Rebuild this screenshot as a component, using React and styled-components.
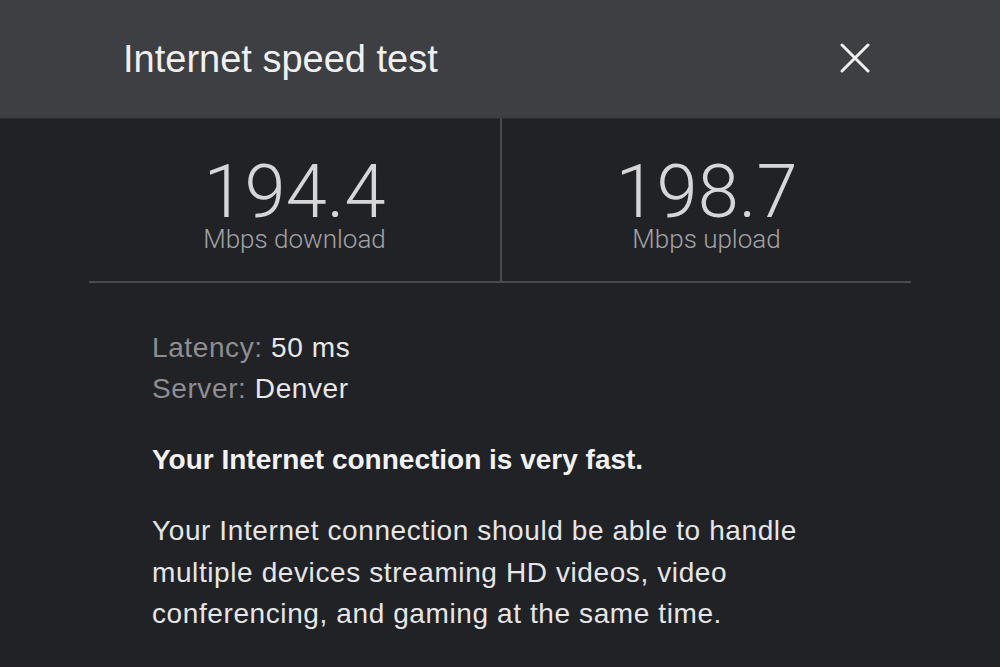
import React from 'react'
import styled, { createGlobalStyle } from 'styled-components'

const GlobalStyle = createGlobalStyle`
  html, body {
    margin: 0;
    padding: 0;
    background: #212226;
  }
  body {
    font-family: "Liberation Sans", Arial, sans-serif;
  }
`

const Page = styled.div`
  width: 1000px;
  height: 667px;
  overflow: hidden;
  background: #212226;
`

const Header = styled.header`
  height: 118px;
  display: flex;
  align-items: center;
  justify-content: space-between;
  padding: 0 130px 0 123px;
  box-sizing: border-box;
  background: #3e3f43;
  box-shadow: 0 1px 0 #2a2b2f;
`

const Title = styled.h1`
  margin: 0;
  font-size: 38px;
  font-weight: 400;
  color: #f0f0f0;
`

const Close = styled.button`
  width: 30px;
  height: 30px;
  padding: 0;
  border: 0;
  background: none;
  display: flex;
  cursor: pointer;
  margin-top: -2px;
`

// two result columns with the divider between them
const Stats = styled.section`
  margin: 0 89px;
  display: grid;
  grid-template-columns: 1fr 1fr;
  border-bottom: 2px solid #4a4b4f;
`

const Stat = styled.div`
  display: flex;
  flex-direction: column;
  align-items: center;
  padding: 46px 0 27px;
  border-left: ${p => (p.divided ? '2px solid #4a4b4f' : 'none')};
`

const Value = styled.div`
  font-family: Roboto, "Liberation Sans", sans-serif;
  font-weight: 300;
  font-size: 74px;
  line-height: 56px;
  color: #d6d6d8;
`

const Unit = styled.div`
  margin-top: 4px;
  font-family: Roboto, "Liberation Sans", sans-serif;
  font-weight: 300;
  font-size: 26px;
  line-height: 30px;
  color: #a2a2a6;
`

const Details = styled.div`
  padding: 44px 0 0 152px;
  max-width: 720px;
  font-size: 28px;
  line-height: 41px;
  letter-spacing: 0.6px;
  color: #e8e8ea;
`

const Line = styled.div``

const Key = styled.span`
  color: #8e8e93;
`

const Verdict = styled.p`
  margin: 30px 0 0;
  font-weight: 700;
  letter-spacing: 0;
  color: #f2f2f4;
`

const Text = styled.p`
  margin: 30px 0 0;
  line-height: 41.5px;
  color: #e6e6e8;
`

const CloseIcon = () => (
  <svg width="30" height="30" viewBox="0 0 30 30">
    <path d="M2 2 L28 28 M28 2 L2 28" stroke="#f0f0f0" strokeWidth="3" strokeLinecap="round" />
  </svg>
)

const results = [
  { value: '194.4', unit: 'Mbps download' },
  { value: '198.7', unit: 'Mbps upload' },
]

export default function App() {
  return (
    <Page>
      <GlobalStyle />
      <Header>
        <Title>Internet speed test</Title>
        <Close aria-label="Close"><CloseIcon /></Close>
      </Header>
      <Stats>
        {results.map((r, i) => (
          <Stat key={r.unit} divided={i > 0}>
            <Value>{r.value}</Value>
            <Unit>{r.unit}</Unit>
          </Stat>
        ))}
      </Stats>
      <Details>
        <Line><Key>Latency:</Key> 50 ms</Line>
        <Line><Key>Server:</Key> Denver</Line>
        <Verdict>Your Internet connection is very fast.</Verdict>
        <Text>
          Your Internet connection should be able to handle multiple devices streaming HD videos,
          video conferencing, and gaming at the same time.
        </Text>
      </Details>
    </Page>
  )
}
